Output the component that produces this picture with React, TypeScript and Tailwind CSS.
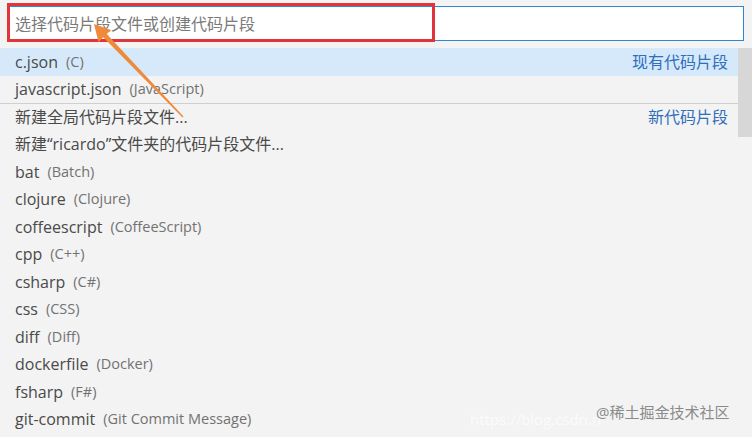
import React from "react";

type Item = { label: string; desc?: string; right?: string; active?: boolean; sep?: boolean };

const items: Item[] = [
  { label: "c.json", desc: "(C)", right: "现有代码片段", active: true },
  { label: "javascript.json", desc: "(JavaScript)" },
  { label: "新建全局代码片段文件...", right: "新代码片段", sep: true },
  { label: "新建“ricardo”文件夹的代码片段文件..." },
  { label: "bat", desc: "(Batch)" },
  { label: "clojure", desc: "(Clojure)" },
  { label: "coffeescript", desc: "(CoffeeScript)" },
  { label: "cpp", desc: "(C++)" },
  { label: "csharp", desc: "(C#)" },
  { label: "css", desc: "(CSS)" },
  { label: "diff", desc: "(Diff)" },
  { label: "dockerfile", desc: "(Docker)" },
  { label: "fsharp", desc: "(F#)" },
  { label: "git-commit", desc: "(Git Commit Message)" },
];

export default function App() {
  return (
    <div
      className="relative w-[752px] h-[437px] overflow-hidden bg-[#f3f3f3]"
      style={{ fontFamily: '"Open Sans", "Noto Sans CJK SC", sans-serif' }}
    >
      <div className="pl-[9px] pr-[8px] pt-[6px]">
        <div className="h-[35px] bg-white border border-[#2b8ad3] flex items-center pl-[5px] text-[16px] text-[#7a7a7a]">
          选择代码片段文件或创建代码片段
        </div>
      </div>
      <div className="relative mt-[7px]">
        <div className="pr-[14px]">
          {items.map((it, i) => (
            <div
              key={i}
              className={
                "h-[27.5px] flex items-center pl-[15px] pr-[10px] text-[16px] whitespace-nowrap " +
                (it.active ? "bg-[#d6e9fb] " : "") +
                (it.sep ? "border-t border-[#cfcfcf] " : "")
              }
            >
              <span className="text-[#4a4a4a]">{it.label}</span>
              {it.desc && <span className="ml-[8px] text-[14.5px] text-[#727272]">{it.desc}</span>}
              <span className="flex-1" />
              {it.right && <span className="text-[#2f6fba]">{it.right}</span>}
            </div>
          ))}
        </div>
        <div className="absolute right-0 top-0 w-[14px] h-[89px] bg-[#d0d0d0]/80" />
      </div>

      {/* red highlight box */}
      <div className="absolute left-[7px] top-[3px] w-[428px] h-[39px] border-[3px] border-[#e2343b]" />

      {/* arrow */}
      <svg className="absolute left-0 top-0" width="752" height="437" viewBox="0 0 752 437">
        <polygon
          points="94,24 111,30 106.8,33.9 183.5,116.5 182.5,117.5 103.2,37.3 98.5,42"
          fill="#f08a3b"
        />
      </svg>

      {/* watermark */}
      <div className="absolute left-[470px] top-[408px] text-[15px] text-white/70 whitespace-nowrap">
        https://blog.csdn.n
      </div>
      <div className="absolute left-[596px] top-[401px] text-[15px] text-[#8a8a8a] whitespace-nowrap">
        @稀土掘金技术社区
      </div>
    </div>
  );
}
